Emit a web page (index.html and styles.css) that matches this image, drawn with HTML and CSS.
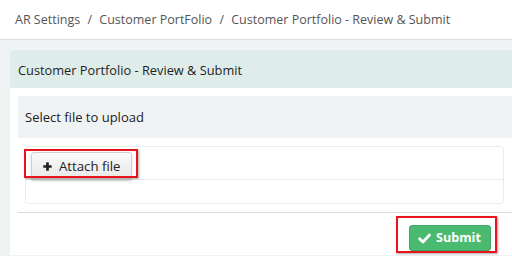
FILE: index.html
```html
<!DOCTYPE html>
<html lang="en">
<head>
    <meta charset="UTF-8">
    <meta name="viewport" content="width=device-width, initial-scale=1.0">
    <title>Customer Portfolio - Review &amp; Submit</title>
    <link rel="stylesheet" href="styles.css">
</head>
<body>
    <header class="breadcrumb">
        <a href="#">AR Settings</a>
        <span class="sep">/</span>
        <a href="#">Customer PortFolio</a>
        <span class="sep">/</span>
        <span class="current">Customer Portfolio - Review &amp; Submit</span>
    </header>

    <main class="page">
        <div class="panel">
            <div class="panel-heading">Customer Portfolio - Review &amp; Submit</div>
            <div class="panel-body">
                <div class="upload-title">Select file to upload</div>

                <div class="upload-box">
                    <div class="upload-toolbar">
                        <span class="marked marked-attach">
                            <button class="btn btn-default">
                                <svg class="icon" viewBox="0 0 10 10" width="9" height="9">
                                    <rect x="3.5" y="0.3" width="3" height="9.4" rx="0.6"/>
                                    <rect x="0.3" y="3.5" width="9.4" height="3" rx="0.6"/>
                                </svg>
                                Attach file
                            </button>
                        </span>
                    </div>
                    <div class="upload-list"></div>
                </div>

                <div class="actions">
                    <span class="marked marked-submit">
                        <button class="btn btn-success">
                            <svg class="icon" viewBox="0 0 12 10" width="13" height="11">
                                <path d="M1.5 5.2 L4.6 8.2 L10.6 1.8" fill="none" stroke="#fff" stroke-width="2.6" stroke-linecap="round" stroke-linejoin="round"/>
                            </svg>
                            Submit
                        </button>
                    </span>
                </div>
            </div>
        </div>
    </main>
</body>
</html>
```

FILE: styles.css
```css
body {
    margin: 0;
    font-family: 'Open Sans', 'Noto Sans', sans-serif;
    font-size: 13px;
    background-color: #eff3f3;
    color: #333;
    overflow: hidden;
    height: 256px;
}

.breadcrumb {
    height: 40px;
    box-sizing: border-box;
    padding: 11px 15px 0;
    background-color: #fff;
    border-bottom: 1px solid #dcdfe0;
    color: #555;
    font-size: 12.5px;
    line-height: 18px;
    white-space: nowrap;
}
.breadcrumb a {
    color: #555;
    text-decoration: none;
}
.breadcrumb .sep {
    margin: 0 4px;
}

.page {
    padding: 10px 0 0 10px;
}

.panel {
    background-color: #fff;
    border-radius: 3px 0 0 0;
    height: 205px;
}
.panel-heading {
    background-color: #deedea;
    border-radius: 3px 0 0 0;
    padding: 11px 8px 9px;
    font-size: 12.8px;
    line-height: 18px;
    color: #1e1e1e;
}
.panel-body {
    padding: 8px 0 0 8px;
}

.upload-title {
    background-color: #f0f3f4;
    padding: 12px 7px;
    line-height: 18px;
    color: #222;
}

.upload-box {
    margin: 8px 8px 0 7px;
    border: 1px solid #e9ecec;
    border-radius: 4px;
}
.upload-toolbar {
    height: 33px;
    padding: 5px 0 0 5px;
    box-sizing: border-box;
    border-bottom: 1px solid #eceeee;
}
.upload-list {
    height: 23px;
}

.actions {
    margin-top: 8px;
    border-top: 1px solid #d9dcdc;
    padding: 12px 21px 0 0;
    text-align: right;
}

.btn {
    font-family: inherit;
    line-height: 18px;
    border-radius: 3px;
    cursor: pointer;
    display: inline-flex;
    align-items: center;
    vertical-align: top;
}
.btn .icon {
    display: block;
}
.btn-default {
    width: 101px;
    height: 28px;
    padding: 0 0 0 11px;
    gap: 7px;
    font-size: 13.2px;
    color: #222;
    background: linear-gradient(#fafafa, #e8e8e8);
    border: 1px solid #d0d0d0;
    box-shadow: 0 1px 2px rgba(0, 0, 0, 0.2);
}
.btn-default .icon {
    fill: #222;
}
.btn-success {
    width: 82px;
    height: 26px;
    padding: 0 0 0 8px;
    gap: 5px;
    font-size: 12.6px;
    color: #fff;
    font-weight: bold;
    background-color: #4aba70;
    border: 1px solid #3fa862;
}

/* red annotation frames drawn over the buttons */
.marked {
    position: relative;
    display: inline-block;
    vertical-align: top;
}
.marked::after {
    content: "";
    position: absolute;
    border: 2px solid #e8141c;
    box-shadow: 1px 1px 2px rgba(0, 0, 0, 0.35);
    pointer-events: none;
}
.marked-attach::after {
    left: -7px;
    top: -3px;
    width: 110px;
    height: 25px;
}
.marked-submit::after {
    left: -13px;
    top: -9px;
    width: 97px;
    height: 33px;
}
```
